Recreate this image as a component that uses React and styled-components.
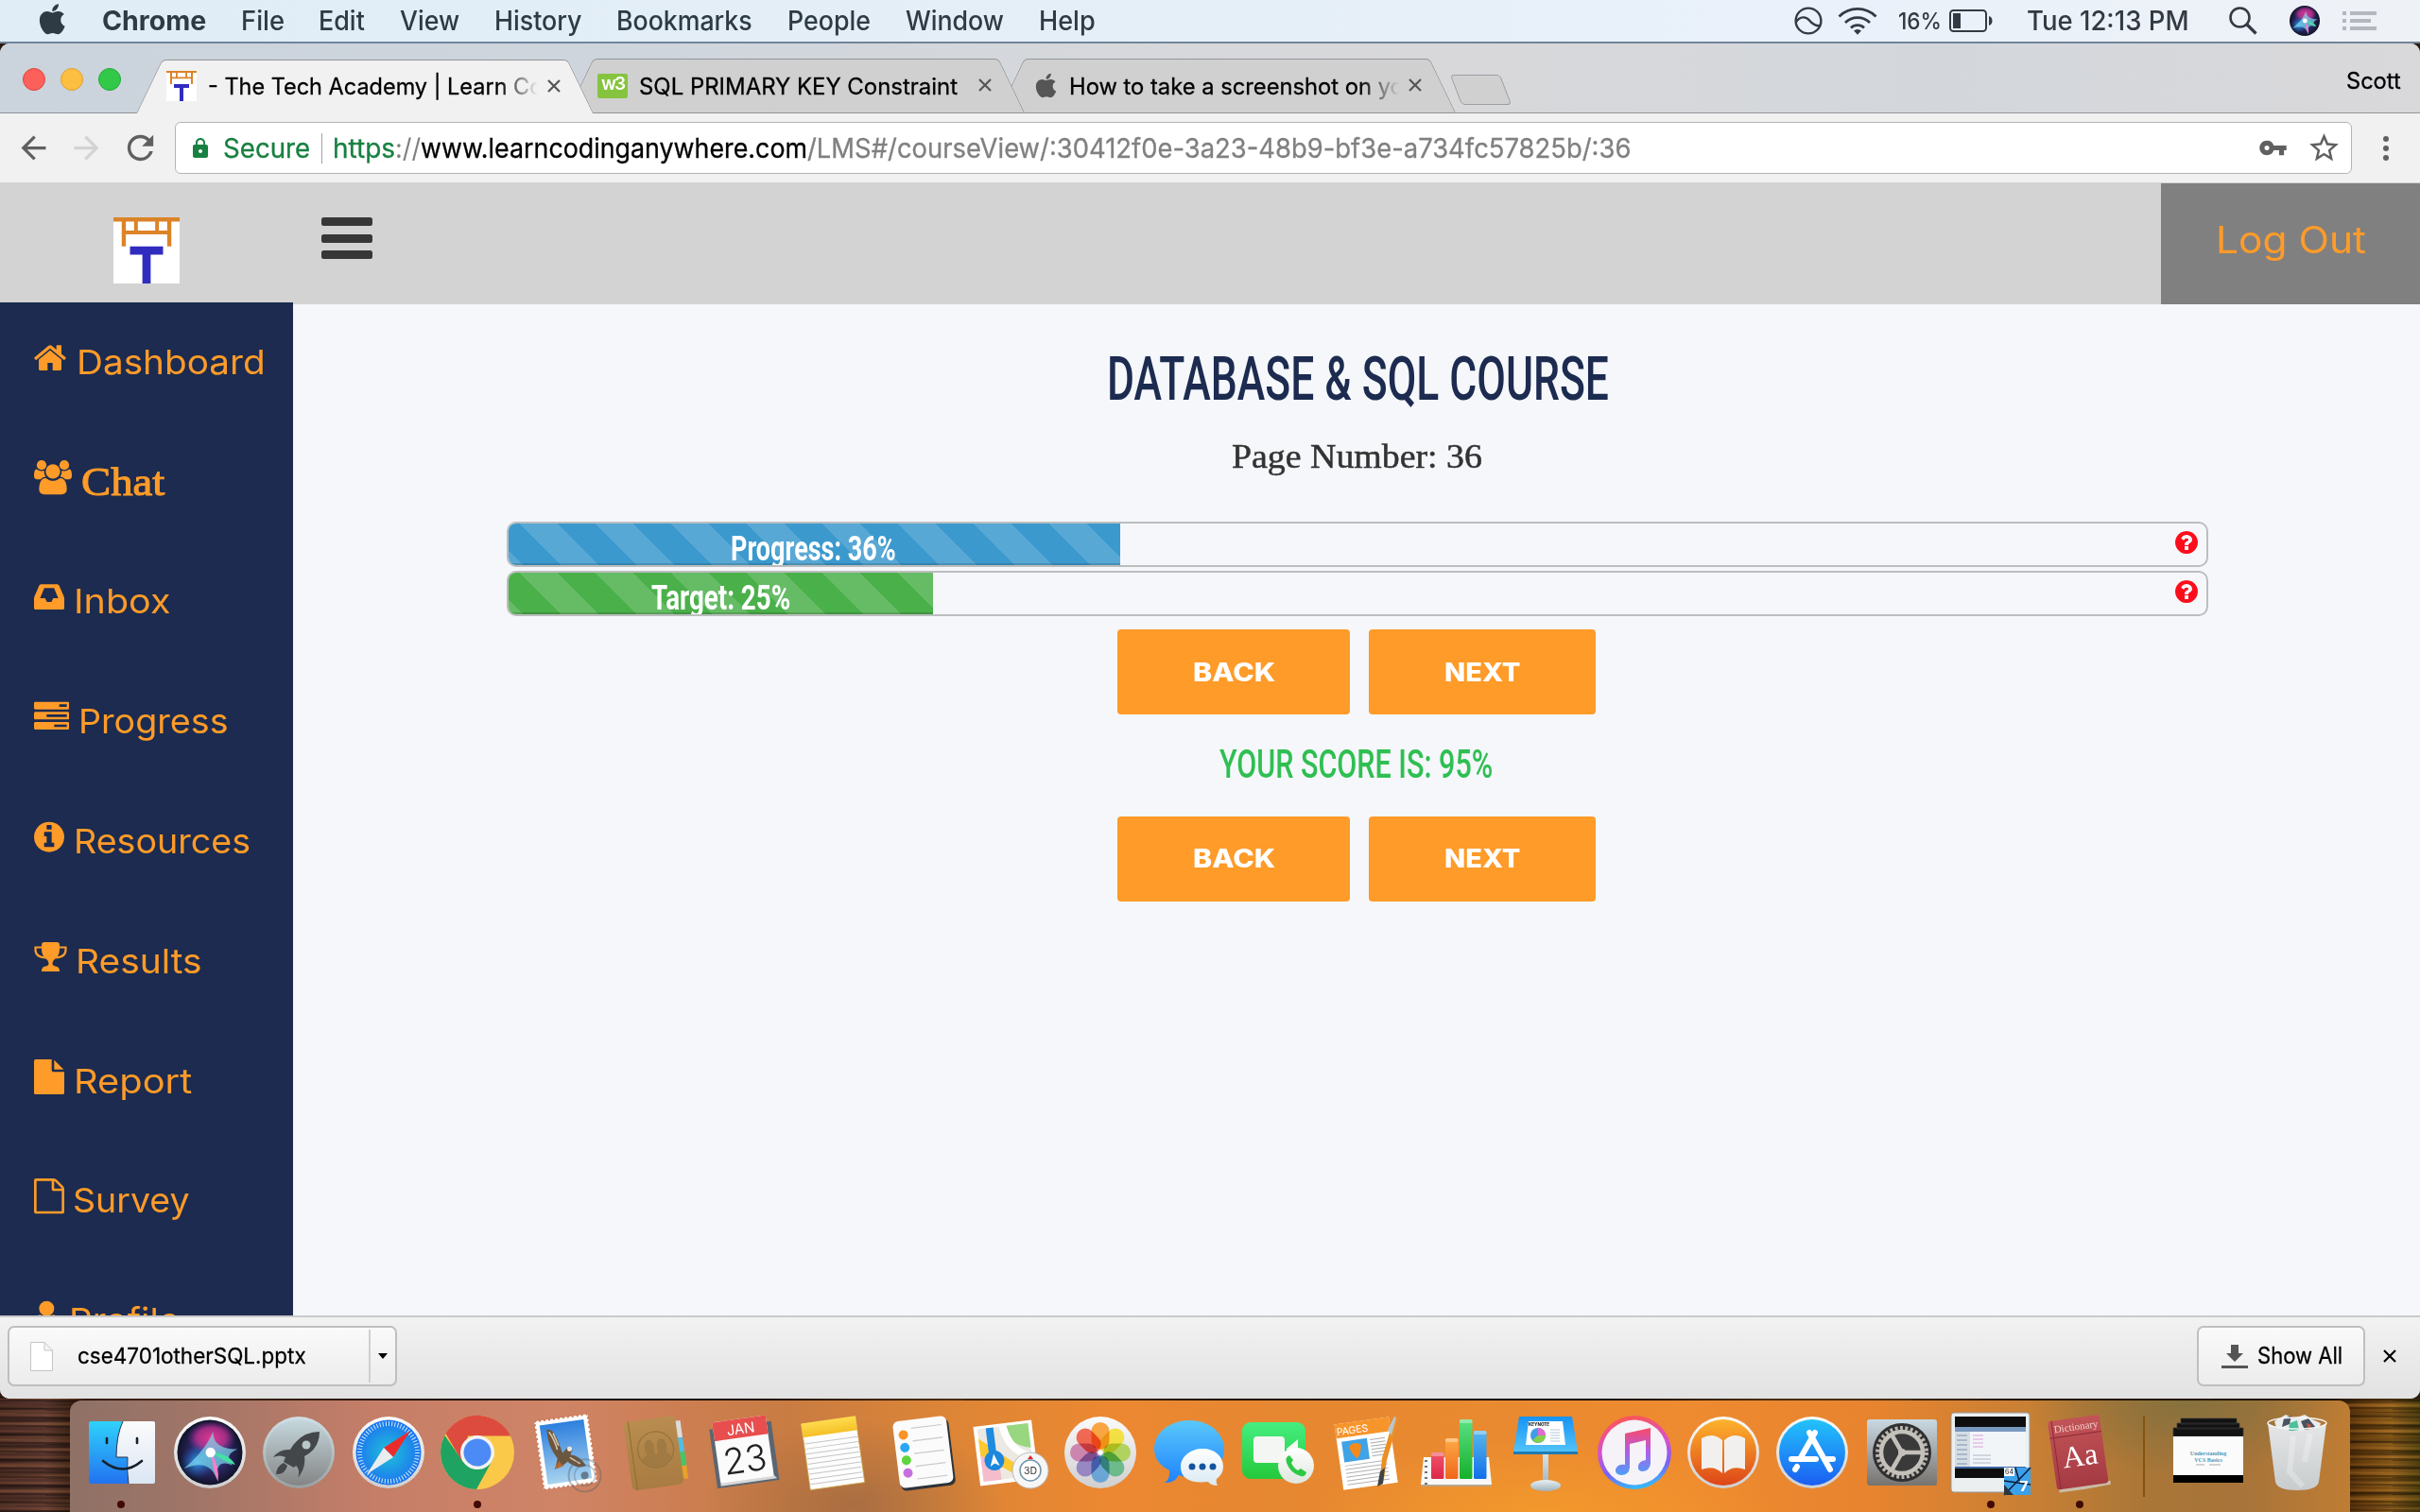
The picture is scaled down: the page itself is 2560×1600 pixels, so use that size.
import React, { useLayoutEffect, useRef, useState } from "react";
import styled, { createGlobalStyle } from "styled-components";
import { FaApple } from "react-icons/fa";
import { MdArrowBack, MdArrowForward, MdRefresh, MdLock, MdVpnKey, MdStarBorder } from "react-icons/md";

const SANS = `Inter, Roboto, "Liberation Sans", sans-serif`;
const CONDENSED = `Roboto, "Open Sans", "Liberation Sans", sans-serif`;
const SERIF = `"Liberation Serif", "DejaVu Serif", serif`;
const ORANGE = "#fe9b29";
const NAVY = "#1c2b4f";

const GlobalStyle = createGlobalStyle`
  *, *::before, *::after { box-sizing: border-box; }
  body { margin: 0; overflow: hidden; font-family: ${SANS}; }
  button { font: inherit; border: 0; padding: 0; background: none; color: inherit; }
  svg { display: block; flex: none; }
`;

/* ---------- fitted text: one line squeezed or stretched to a column width ---------- */
const FitBox = styled.span`
  display: block;
  flex: none;
  width: ${(p) => p.$w}px;
  margin-left: ${(p) => p.$ml || 0}px;
  padding-top: ${(p) => (p.$drop === undefined ? 2 : p.$drop)}px;
  line-height: 1.25;
  text-align: left;
  font-family: ${(p) => p.$font || SANS};
  font-size: ${(p) => p.$size}px;
  font-weight: ${(p) => p.$weight || 400};
  color: ${(p) => p.$color || "inherit"};
  -webkit-text-stroke: ${(p) => p.$stroke || 0}px currentColor;
`;
const FitInner = styled.span`
  display: inline-block;
  white-space: pre;
  transform-origin: 0 50%;
`;
function Fit({ w, children, size = 28, ...rest }) {
  const ref = useRef(null);
  const [scale, setScale] = useState(1);
  useLayoutEffect(() => {
    setScale(w / ref.current.offsetWidth);
  }, [w]);
  return (
    <FitBox $w={w} $size={size} $ml={rest.ml} $drop={rest.drop} $font={rest.font} $weight={rest.weight} $color={rest.color} $stroke={rest.stroke}>
      <FitInner ref={ref} style={{ transform: `scaleX(${scale})` }}>{children}</FitInner>
    </FitBox>
  );
}

const Screen = styled.div`
  width: 2560px;
  height: 1600px;
  display: flex;
  flex-direction: column;
  overflow: hidden;
  background: #2b1a12;
`;

/* ---------- menu bar ---------- */
const MenuBar = styled.header`
  height: 46px;
  flex: none;
  display: flex;
  align-items: center;
  padding: 0 46px 0 42px;
  border-bottom: 2px solid #71859a;
  background: linear-gradient(90deg, #e0edf6, #e5eff8 50%, #eaf1fa 75%, #eef2f7);
  color: #2e3a44;
`;
const AppleSlot = styled.span`
  width: 26px;
  margin-top: -4px;
  display: flex;
  justify-content: center;
`;
const MenuItems = styled.nav`
  display: flex;
  gap: 36.700px;
  margin-left: 40px;
  flex: 1;
`;
const StatusItems = styled.div`
  display: flex;
  align-items: center;
  color: #343a43;
`;
const MENUS = [
  ["Chrome", 110, 700], ["File", 46], ["Edit", 49], ["View", 63], ["History", 93],
  ["Bookmarks", 144], ["People", 88], ["Window", 104], ["Help", 60],
];

const SiriOrb = ({ r }) => (
  <g>
    <circle r={r} fill="url(#siriBase)" />
    <ellipse cx={r * 0.05} cy={-r * 0.45} rx={r * 0.75} ry={r * 0.52} fill="url(#siriPink)" />
    <ellipse cx={-r * 0.4} cy={r * 0.3} rx={r * 0.52} ry={r * 0.52} fill="url(#siriBlue)" />
    <path d={`M${-r * 0.8} ${r * 0.5}Q${-r * 0.1} ${-r * 0.1} ${r * 0.1} ${-r * 0.65}Q${r * 0.08} ${-r * 0.1} ${r * 0.85} ${-r * 0.1}Q${r * 0.4} ${r * 0.08} ${r * 0.7} ${r * 0.4}Q${r * 0.15} ${r * 0.15} ${r * 0.22} ${r * 0.85}Q${0} ${r * 0.15} ${-r * 0.8} ${r * 0.5}Z`} fill="#7fd9ec" opacity=".7" />
    <path d={`M${r * 0.05} ${r * 0.05}Q${r * 0.3} ${r * 0.4} ${r * 0.25} ${r * 0.9}Q${r * 0.08} ${r * 0.5} ${r * 0.05} ${r * 0.05}Z`} fill="#ff7fc4" />
    <path d={`M${r * 0.1} 0Q${r * 0.6} ${r * 0.05} ${r * 0.78} ${r * 0.38}Q${r * 0.4} ${r * 0.3} ${r * 0.1} 0Z`} fill="#45e0a4" />
    <circle cx={r * 0.02} cy={0} r={r * 0.15} fill="#fff" />
  </g>
);

const Defs = styled.svg`
  position: absolute;
  width: 0;
  height: 0;
`;
const grad = (id, a, b, c) => (
  <linearGradient id={id} x1="0" y1="0" x2="0" y2="1">
    <stop offset="0" stopColor={a} />
    {c && <stop offset=".5" stopColor={c} />}
    <stop offset="1" stopColor={b} />
  </linearGradient>
);
const SharedDefs = () => (
  <Defs aria-hidden="true">
    <defs>
      <radialGradient id="siriBase"><stop offset="0" stopColor="#2a6fc0" /><stop offset=".6" stopColor="#2a2560" /><stop offset="1" stopColor="#101428" /></radialGradient>
      <radialGradient id="siriPink"><stop offset="0" stopColor="#e0368f" /><stop offset=".6" stopColor="#c03090" stopOpacity=".8" /><stop offset="1" stopColor="#8a2a90" stopOpacity="0" /></radialGradient>
      <radialGradient id="siriBlue"><stop offset="0" stopColor="#2f9be8" /><stop offset="1" stopColor="#1f60c0" stopOpacity="0" /></radialGradient>
      {grad("gFinder", "#2fd2fb", "#2272f0")}
      {grad("gFace", "#fbfbfb", "#dbe6f4")}
      {grad("gRing", "#fbfbfb", "#cfcfcf")}
      {grad("gLaunch", "#c5d8de", "#858585")}
      {grad("gLaunchRing", "#cfe0e6", "#9aa0a2")}
      <radialGradient id="gSafari"><stop offset="0" stopColor="#20c3d8" /><stop offset="1" stopColor="#1c74f0" /></radialGradient>
      {grad("gSky", "#2d7fdf", "#a9d3ef")}
      {grad("gTan", "#b98d50", "#a87c42")}
      {grad("gNote", "#ffdc4f", "#f5c026")}
      {grad("gMsg", "#5ac8fa", "#1f83ff")}
      {grad("gPale", "#ffffff", "#d9e9f3")}
      {grad("gFt", "#45ee80", "#25c93c")}
      {grad("gFtw", "#ffffff", "#dfe5dc")}
      {grad("gRed", "#f2546c", "#dc2747")}
      {grad("gOr", "#fdab45", "#f0661c")}
      {grad("gGr", "#5be083", "#16b02b")}
      {grad("gBl", "#5ab7ea", "#1070ec")}
      {grad("gKey", "#1793f5", "#55c6f8")}
      {grad("gSteel", "#e9f1f5", "#9fb2bd")}
      <linearGradient id="gTunes" x1=".5" y1="0" x2=".7" y2="1"><stop offset="0" stopColor="#fb5658" /><stop offset=".4" stopColor="#d84fd0" /><stop offset=".7" stopColor="#7a62f5" /><stop offset="1" stopColor="#29c8fb" /></linearGradient>
      {grad("gNoteGlyph", "#fb4a63", "#4aa0f8", "#b25de8")}
      {grad("gBooks", "#fdb32c", "#dd4518")}
      {grad("gStore", "#22c3fb", "#1b5ef2")}
      {grad("gPref", "#c9d9e2", "#77736e")}
      {grad("gDict", "#c25457", "#a53a43")}
      {grad("gTrash", "#e4e6e7", "#c9cccd")}
    </defs>
  </Defs>
);

const EyeIcon = () => (
  <svg width="30" height="30" viewBox="0 0 30 30" fill="none" stroke="currentColor" strokeWidth="2.4">
    <circle cx="15" cy="15" r="13.4" />
    <path d="M2 16.500C6 9.500 13 10.500 16 14.500S24 21 27.500 20" />
  </svg>
);
const WifiIcon = () => (
  <svg width="42" height="30" viewBox="0 0 42 30" fill="none" stroke="currentColor" strokeWidth="2.8">
    <path d="M1.500 10.500A27.500 27.500 0 0 1 40.500 10.500M8 17A18.500 18.500 0 0 1 34 17M14 22.500A10 10 0 0 1 28 22.500" />
    <path d="M17 25.500Q21 22.500 25 25.500L21 29.800Z" fill="currentColor" stroke="none" />
  </svg>
);
const BatteryIcon = () => (
  <svg width="46" height="24" viewBox="0 0 46 24">
    <rect x="1" y="1" width="38" height="22" rx="3.500" fill="none" stroke="currentColor" strokeWidth="2" />
    <rect x="4" y="4" width="8" height="16" fill="currentColor" />
    <path d="M42 7Q45.500 8 45.500 12T42 17Z" fill="currentColor" />
  </svg>
);
const SearchIcon = () => (
  <svg width="30" height="30" viewBox="0 0 30 30" fill="none" stroke="currentColor" strokeWidth="2.600">
    <circle cx="11.500" cy="11.500" r="10" />
    <path d="M18.500 18.500L28.500 28.500" strokeWidth="3.200" />
  </svg>
);
const ListIcon = () => (
  <svg width="36" height="20" viewBox="0 0 36 20" fill="#b4b8be">
    <path d="M0 0h4v4H0zM8 0h28v4H8zM0 8h4v4H0zM8 8h22v4H8zM0 16h4v4H0zM8 16h28v4H8z" />
  </svg>
);
const Gap = styled.i`
  flex: none;
  width: ${(p) => p.$w}px;
`;

/* ---------- browser window ---------- */
const Window = styled.main`
  height: 1434px;
  flex: none;
  display: flex;
  flex-direction: column;
  overflow: hidden;
  border-radius: 10px;
  background: #f5f7fb;
`;
const TabStrip = styled.div`
  height: 74px;
  flex: none;
  display: flex;
  align-items: flex-end;
  border-bottom: 1px solid #919498;
  background: linear-gradient(90deg, #cbd3dc, #ced5dd 25%, #d6d8db 45%, #d8d8da 60%, #d3d7dc 80%, #d9d8da);
`;
const Lights = styled.div`
  display: flex;
  gap: 16px;
  width: 144px;
  padding: 0 0 23px 24px;
`;
const Light = styled.i`
  width: 24px;
  height: 24px;
  border-radius: 50%;
  background: ${(p) => p.$c};
  border: 1px solid ${(p) => p.$b};
`;
const TabBox = styled.div`
  position: relative;
  z-index: ${(p) => p.$z};
  width: 484px;
  height: 57px;
  flex: none;
  margin-left: ${(p) => (p.$active ? 0 : -28)}px;
  margin-bottom: ${(p) => (p.$active ? -1 : 0)}px;
  padding: 0 0 1px 32px;
  display: flex;
  align-items: center;
  &::before, &::after {
    content: "";
    position: absolute;
    z-index: -1;
    top: 0;
    bottom: 0;
    background: ${(p) => (p.$active ? "#f1f1f1" : "#d0d0d0")};
    border-top: 1px solid #919498;
  }
  &::before {
    left: 0;
    right: 50%;
    border-left: 1px solid #919498;
    border-top-left-radius: 5px;
    transform: skewX(-25.700deg);
    transform-origin: 0 100%;
  }
  &::after {
    right: 0;
    left: 45%;
    border-right: 1px solid #919498;
    border-top-right-radius: 5px;
    transform: skewX(25.700deg);
    transform-origin: 100% 100%;
  }
`;
const TabTitle = styled.div`
  flex: none;
  width: ${(p) => p.$w}px;
  margin-left: ${(p) => p.$ml}px;
  overflow: hidden;
  color: #000;
  ${(p) => p.$fade && "mask-image: linear-gradient(90deg, #000 calc(100% - 42px), transparent);"}
`;
const Close = ({ size = 14, color = "#555" }) => (
  <svg width={size} height={size} viewBox="0 0 14 14" stroke={color} strokeWidth="2.200"><path d="M1 1l12 12M13 1L1 13" /></svg>
);
const NewTab = styled.i`
  width: 53px;
  height: 32px;
  margin: 0 0 8px 0;
  border: 1px solid #9b9ea1;
  border-radius: 4px;
  background: #d0d0d0;
  transform: skewX(21deg);
`;
const Profile = styled.div`
  margin-left: auto;
  padding: 0 20px 18px 0;
`;
const Toolbar = styled.div`
  height: 73px;
  flex: none;
  display: flex;
  align-items: center;
  padding: 0 33px 0 16px;
  background: #f1f1f1;
  color: #606060;
`;
const Omnibox = styled.div`
  width: 2303px;
  height: 55px;
  margin-left: 16px;
  padding: 0 10px 0 14px;
  display: flex;
  align-items: center;
  border: 1px solid #b4b4b4;
  border-radius: 6px;
  background: #fff;
`;
const Divider = styled.i`
  width: 1px;
  height: 32px;
  margin: 0 11px 0 12px;
  background: #a0a0a0;
`;
const Spacer = styled.div`
  flex: 1;
`;

const TechLogo = ({ size }) => (
  <svg width={size} height={size} viewBox="0 0 16 16">
    <path fill="#fff" d="M0 0h16v16H0z" />
    <path fill="#dc8327" d="M0 0h16v1H0zM2 1h1v6H2zM13 1h1v6h-1zM3 3.200h10v.9H3zM5 1h.9v2.200H5zM10.100 1h.9v2.200h-.9z" />
    <path fill="#312cc0" d="M4 7h8v2H9v7H7V9H4z" />
  </svg>
);
const W3Icon = styled.div`
  width: 32px;
  height: 26px;
  flex: none;
  margin-top: 2px;
  border-radius: 2px;
  background: #86c440;
  color: #fff;
  font: 600 19px/22px ${SANS};
  letter-spacing: -2px;
  text-align: center;
`;

/* ---------- page ---------- */
const PageHeader = styled.div`
  height: 129px;
  flex: none;
  display: flex;
  padding: 1px 0 0 120px;
  background: #d3d3d3;
`;
const LogoSlot = styled.div`
  padding-top: 36px;
`;
const Hamburger = styled.button`
  width: 54px;
  margin: 36px 0 0 150px;
  display: flex;
  flex-direction: column;
  gap: 8.500px;
  i { height: 9px; border-radius: 2.500px; background: #373737; }
`;
const LogOut = styled.button`
  width: 274px;
  height: 128px;
  margin-left: auto;
  padding: 0 0 8px 58px;
  display: flex;
  align-items: center;
  background: #808080;
`;
const Body = styled.div`
  flex: 1;
  min-height: 0;
  display: flex;
`;
const Sidebar = styled.aside`
  width: 310px;
  height: 1072px;
  margin-top: -2px;
  flex: none;
  overflow: hidden;
  background: ${NAVY};
  color: ${ORANGE};
`;
const NavItem = styled.a`
  height: 126.800px;
  padding-left: 36px;
  display: flex;
  align-items: center;
  svg { margin-bottom: 10px; }
`;
const FaGlyph = ({ d, x = 128, w = 1536 }) => (
  <svg width={w / 48} height="37.333" viewBox={`${x} 0 ${w} 1792`} fill="currentColor"><path d={d} fillRule="evenodd" /></svg>
);
const DISC = "M1664 896q0 209-103 385.500T1281.500 1561 896 1664t-385.500-103T231 1281.500 128 896t103-385.500T510.500 231 896 128t385.500 103T1561 510.500 1664 896z";
const UsersIcon = () => (
  <svg width="40" height="37.333" viewBox="0 0 1920 1792" fill="currentColor">
    <g transform="translate(0 -50)">
      <circle cx="384" cy="300" r="245" /><circle cx="1536" cy="300" r="245" /><circle cx="960" cy="622" r="365" />
      <path d="M593 896q-162 5-265 128H194q-82 0-138-40.500T0 865q0-353 124-353 6 0 43.500 21t97.500 42.500T384 597q67 0 133-23-5 37-5 66 0 139 81 256zM1327 896q81-117 81-256 0-29-5-66 66 23 133 23 59 0 119-21.500t97.500-42.500 43.500-21q124 0 124 353 0 78-56 118.500T1726 1024h-134q-103-123-265-128zM1664 1533q0 120-73 189.500t-194 69.500H523q-121 0-194-69.500T256 1533q0-53 3.500-103.500t14-109T300 1212t43-97.500 62-81 85.500-53.500T602 960q10 0 43 21.500t73 48 107 48 135 21.500 135-21.500 107-48 73-48 43-21.500q61 0 111.500 20t85.500 53.500 62 81 43 97.500 26.500 108.500 14 109 3.500 103.500z" />
    </g>
  </svg>
);
const TrophyIcon = () => (
  <svg width="35" height="37.333" viewBox="0 0 35 37.333" fill="none" stroke="currentColor" strokeWidth="2.200">
    <path d="M9 8.500H1.500V11Q1.500 19 12.500 19.500M26 8.500H33.500V11Q33.500 19 22.500 19.500" />
    <path stroke="none" fill="currentColor" d="M8 6Q8 3 11 3H24Q27 3 27 6V11Q27 17 22 21Q19.500 23 19.500 25.500Q19.500 28 23 28.500Q26 29 27 32V34H8V32Q9 29 12 28.500Q15.500 28 15.500 25.500Q15.500 23 13 21Q8 17 8 11Z" />
  </svg>
);
const NAV = [
  ["Dashboard", 200, 11, <FaGlyph x={80} w={1632} d="M1472 992v480q0 26-19 45t-45 19h-384v-384H768v384H384q-26 0-45-19t-19-45V992q0-1 .5-3t.5-3l575-474 575 474q1 2 1 6zm223-69l-62 74q-8 9-21 11h-3q-13 0-21-7L896 424l-692 577q-12 8-24 7-13-2-21-11l-62-74q-8-10-7-23.500T101 878l719-599q32-26 76-26t76 26l244 204V288q0-14 9-23t23-9h192q14 0 23 9t9 23v408l219 182q10 8 11 21.500t-7 23.500z" />],
  ["Chat", 88, 10, <UsersIcon />, SERIF],
  ["Inbox", 102, 10, <FaGlyph d="M1104 960h255q-1-3-2.500-8t-2.500-8l-212-496H650L438 944q-1 2-2.500 8t-2.500 8h255l95 192h226zm560 30v482q0 26-19 45t-45 19H192q-26 0-45-19t-19-45V990q0-62 25-123l238-552q10-25 36.500-42t52.500-17h832q26 0 52.500 17t36.500 42l238 552q25 61 25 123z" />],
  ["Progress", 159, 10, <FaGlyph x={0} w={1792} d="M1024 1408h640v-128h-640v128zm-384-512h1024V768H640v128zm640-512h384V256h-384v128zm512 832v256q0 26-19 45t-45 19H64q-26 0-45-19t-19-45v-256q0-26 19-45t45-19h1664q26 0 45 19t19 45zm0-512v256q0 26-19 45t-45 19H64q-26 0-45-19T0 960V704q0-26 19-45t45-19h1664q26 0 45 19t19 45zm0-512v256q0 26-19 45t-45 19H64q-26 0-45-19T0 448V192q0-26 19-45t45-19h1664q26 0 45 19t19 45z" />],
  ["Resources", 187, 10, <FaGlyph d={"M1152 1376v-160q0-14-9-23t-23-9h-96V672q0-14-9-23t-23-9H672q-14 0-23 9t-9 23v160q0 14 9 23t23 9h96v320h-96q-14 0-23 9t-9 23v160q0 14 9 23t23 9h448q14 0 23-9t9-23zm-128-896V320q0-14-9-23t-23-9H800q-14 0-23 9t-9 23v160q0 14 9 23t23 9h192q14 0 23-9t9-23z" + DISC} />],
  ["Results", 134, 9, <TrophyIcon />],
  ["Report", 125, 10, <FaGlyph d="M1152 512V40q22 14 36 28l408 408q14 14 28 36h-472zm-128 32q0 40 28 68t68 28h544v1056q0 40-28 68t-68 28H224q-40 0-68-28t-28-68V96q0-40 28-68T224 0h800v544z" />],
  ["Survey", 124, 9, <FaGlyph d="M1596 380q28 28 48 76t20 88v1152q0 40-28 68t-68 28H224q-40 0-68-28t-28-68V96q0-40 28-68T224 0h896q40 0 88 20t76 48zm-444-244v376h376q-10-29-22-41l-313-313q-12-12-41-22zm384 1528V640h-416q-40 0-68-28t-28-68V128H256v1536h1280z" />],
  ["Profile", 117, 10, <FaGlyph x={256} w={1280} d="M1536 1399q0 109-62.500 187t-150.500 78H469q-88 0-150.500-78T256 1399q0-85 8.500-160.500t31.500-152 58.500-131 94-89T583 832q131 128 313 128t313-128q76 0 134.500 34.500t94 89 58.500 131 31.500 152 8.500 160.500zM1280 512q0 159-112.500 271.500T896 896 624.500 783.500 512 512t112.500-271.500T896 128t271.500 112.500T1280 512z" />],
];
const Content = styled.section`
  flex: 1;
  display: flex;
  flex-direction: column;
  align-items: center;
  padding: 38px 0 0 2px;
`;
const PageNumber = styled.div`
  margin: 19px 2px 0 0;
`;
const Bars = styled.div`
  display: flex;
  flex-direction: column;
  gap: 4px;
  margin-top: 46px;
`;
const Track = styled.div`
  width: 1800px;
  height: 48px;
  display: flex;
  justify-content: space-between;
  overflow: hidden;
  border: 2px solid #bcbebe;
  border-radius: 10px;
  svg { margin: 8px 9px 0 0; }
`;
const Fill = styled.div`
  height: 44px;
  padding: 2px 1px 0 0;
  display: flex;
  justify-content: center;
  color: #fff;
  background: linear-gradient(45deg, rgba(255,255,255,.15) 25%, transparent 25%, transparent 50%, rgba(255,255,255,.15) 50%, rgba(255,255,255,.15) 75%, transparent 75%) 12px 0 / 80px 80px ${(p) => p.$c};
  box-shadow: inset 0 -2px 0 rgba(0,0,0,.15);
`;
const HelpIcon = () => (
  <svg width="24" height="24" viewBox="128 128 1536 1536" fill="#fd0d1b">
    <path fillRule="evenodd" d={"M1024 1376v-192q0-14-9-23t-23-9H800q-14 0-23 9t-9 23v192q0 14 9 23t23 9h192q14 0 23-9t9-23zm256-672q0-88-55.500-163t-138.500-116-170-41q-243 0-371 213-15 24 8 42l132 100q7 6 19 6 16 0 25-12 53-68 86-92 34-24 86-24 48 0 85.500 26t37.500 59q0 38-20 61t-68 45q-63 28-115.500 86.500T768 1020v36q0 14 9 23t23 9h192q14 0 23-9t9-23q0-19 21.500-49.500t54.500-49.500q32-18 49-28.500t46-35 44.500-48 28-60.500 12.500-81z" + DISC} />
  </svg>
);
const ButtonRow = styled.div`
  display: flex;
  gap: 20px;
  margin: ${(p) => p.$mt}px 2px 0 0;
`;
const ActionButton = styled.button`
  width: ${(p) => p.$w}px;
  height: 90px;
  display: flex;
  align-items: center;
  justify-content: center;
  border-radius: 4px;
  background: ${ORANGE};
  color: #fff;
`;
const Score = styled.div`
  margin: 25px 3px 0 0;
`;
const PagerButtons = ({ mt }) => (
  <ButtonRow $mt={mt}>
    <ActionButton $w={246}><Fit w={87} size={26.500} drop={1} weight={800}>BACK</Fit></ActionButton>
    <ActionButton $w={240}><Fit w={81} size={26.500} drop={1} weight={800}>NEXT</Fit></ActionButton>
  </ButtonRow>
);

/* ---------- downloads shelf ---------- */
const Shelf = styled.footer`
  height: 88px;
  flex: none;
  display: flex;
  align-items: center;
  padding: 0 25px 4px 8px;
  border-top: 2px solid #c9c9cb;
  background: linear-gradient(#f2f2f2, #e2e2e2);
  color: #000;
`;
const Chip = styled.div`
  width: ${(p) => p.$w}px;
  height: 64px;
  padding-left: ${(p) => p.$pl}px;
  display: flex;
  align-items: center;
  border: 2px solid #bfbfbf;
  border-radius: 7px;
  background: linear-gradient(#fafafa, #ececec);
`;
const ChipRule = styled.i`
  width: 2px;
  height: 56px;
  margin: 0 8px 0 66px;
  background: #cfcfcf;
`;

/* ---------- desktop and dock ---------- */
const Desktop = styled.div`
  flex: 1;
  padding: 2px 74px 0;
  background:
    repeating-linear-gradient(0.600deg, rgba(0,0,0,.35) 0 2px, rgba(255,170,90,.07) 3px 5px, rgba(0,0,0,.12) 6px 9px),
    repeating-linear-gradient(-0.800deg, rgba(255,170,90,.08) 0 3px, rgba(0,0,0,.26) 5px 8px, transparent 9px 14px),
    linear-gradient(90deg, #502e26 0, #633c33 50px, #2c1608 90px, #2a1a04 2460px, #75450e 2500px, #92601a 2530px, #57460f 2560px);
`;
const DockBar = styled.div`
  height: 118px;
  padding-left: 7px;
  display: flex;
  border-radius: 12px 12px 0 0;
  background:
    radial-gradient(ellipse 160px 90px at 830px 110px, rgba(165,108,66,.9), transparent),
    radial-gradient(ellipse 260px 90px at 1560px 130px, rgba(246,158,42,.8), transparent),
    radial-gradient(ellipse 170px 80px at 2240px 0px, rgba(130,112,62,.9), transparent),
    linear-gradient(90deg, #8f7166 0, #a07568 130px, #c57e68 320px, #cf8466 520px, #cd7f56 620px, #c97c42 760px, #dd8536 930px, #ec8831 1100px, #e68731 1280px, #e98a30 1500px, #ee8a2f 1700px, #e8842f 1900px, #c98034 2070px, #a97637 2200px, #a8743a 2300px, #bf7d33 2412px);
`;
const Slot = styled.div`
  width: 94.180px;
  flex: none;
  display: flex;
  flex-direction: column;
  align-items: center;
  padding-top: 7px;
`;
const RunDot = styled.i`
  width: 8px;
  height: 8px;
  margin-top: 3px;
  border-radius: 50%;
  background: #420a04;
`;
const DockRule = styled.i`
  width: 2px;
  height: 86px;
  margin: 16px 20px 0 20px;
  background: #84530f;
`;
const petals = ["#f99a2b", "#f2dd2c", "#a9cf4c", "#5db57f", "#5b9ed6", "#8d7bc0", "#c977a8", "#f0553c"];
const T = (props) => <text textAnchor="middle" fontFamily={SANS} {...props} />;
const lines = (n, y0, dy, x1, x2, c = "#c5c5c5", w = 1) =>
  Array.from({ length: n }, (_, i) => <path key={i} d={`M${x1} ${y0 + i * dy}H${x2}`} stroke={c} strokeWidth={w} />);

const APPS = [
  ["Finder", <g>
    <rect x="-34" y="-33" width="70" height="66" rx="2" fill="url(#gFinder)" />
    <path d="M2 -33H34Q36 -33 36 -31V31Q36 33 34 33H8Q6 20 7 5H-5Q-5 -18 2 -33Z" fill="url(#gFace)" />
    <path d="M2 -33Q-5 -18 -5 5H7Q6 20 8 33" fill="none" stroke="#26364e" strokeWidth="1" />
    <path d="M-15 -15V-10M17 -15V-10M-19 9Q2 26 22 9" stroke="#16202c" strokeWidth="2.600" strokeLinecap="round" fill="none" />
  </g>, true],
  ["Siri", <g><circle r="38" fill="url(#gRing)" /><SiriOrb r={34.500} /></g>],
  ["Launchpad", <g>
    <circle r="38" fill="url(#gLaunchRing)" /><circle r="35" fill="url(#gLaunch)" />
    <path d="M22 -22Q2 -22 -9 -3Q-20 -4 -27 5Q-20 2 -14 5L-16 10L-5 16L-3 14Q2 18 -1 27Q8 16 6 4Q22 -4 22 -22Z" fill="#43474a" />
    <circle cx="8" cy="-8" r="4.500" fill="#b9c6ca" /><path d="M-16 11Q-23 14 -24 23Q-15 24 -12 14Z" fill="#43474a" />
  </g>],
  ["Safari", <g>
    <circle r="38" fill="url(#gRing)" /><circle r="34.500" fill="url(#gSafari)" />
    <circle r="30.500" fill="none" stroke="#cfe9fb" strokeWidth="5" strokeDasharray="1 2.190" />
    <path d="M23 -23L5 5L-5 -5Z" fill="#ee2b2b" /><path d="M-23 23L-5 -5L5 5Z" fill="#e9edf0" />
  </g>],
  ["Chrome", <g>
    <circle r="39" fill="#fbc94a" />
    <path d="M-34.500 -18A39 39 0 0 0 -1 39L17 6L-15 10Z" fill="#1ea362" />
    <path d="M35 -17.500A39 39 0 0 0 -33.500 -20L-17 8L-10 -17.500Z" fill="#dd4b3e" />
    <circle r="18" fill="#f3f3f3" /><circle r="14.500" fill="#4c8bf5" />
  </g>, true],
  ["Mail", <g transform="translate(-1 0) rotate(-8)">
    <rect x="-28" y="-37" width="57" height="73" fill="#fff" />
    <rect x="-28" y="-37" width="57" height="73" fill="none" stroke="#cc7d5c" strokeWidth="2.500" strokeDasharray="2 3" />
    <rect x="-23" y="-32" width="47" height="63" fill="url(#gSky)" />
    <path d="M-16 -27Q-9 -27 -6 -14L-3 0L2 -4Q5 -6 8 -2L5 3Q14 5 20 17Q10 20 1 10L-4 13L-13 16L-9 5Q-18 -10 -16 -27Z" fill="#6b5640" />
    <path d="M-14 -24Q-9 -14 -8 -4M-10 -22L-6 -8M4 6L14 14" stroke="#d5c4a8" strokeWidth="1.600" fill="none" /><circle cx="5" cy="-3" r="2.500" fill="#f0e8dc" /><path d="M-14 16L-8 8L-4 14Z" fill="#b4672f" />
    <circle cx="17" cy="27" r="17" fill="none" stroke="#59616b" strokeOpacity=".4" strokeWidth="2" /><circle cx="17" cy="27" r="11" fill="none" stroke="#59616b" strokeOpacity=".35" strokeWidth="1.500" />
    <circle cx="17" cy="27" r="4" fill="#3c4652" fillOpacity=".6" />
  </g>],
  ["Contacts", <g transform="rotate(-8)">
    <path d="M25 -30H31V-12H25Z" fill="#dcdcdc" /><path d="M25 -12H31V3H25Z" fill="#52bde0" /><path d="M25 3H31V18H25Z" fill="#42c86a" /><path d="M25 18H31V32H25Z" fill="#e8a12a" />
    <rect x="-29" y="-36" width="55" height="73" rx="5" fill="url(#gTan)" /><path d="M-24 -36V37" stroke="#93702f" strokeWidth="1.200" />
    <circle cx="1" cy="-3" r="19" fill="none" stroke="#97733c" strokeWidth="1.300" />
    <path d="M-15 7Q-13 3 -9 2Q-13 -13 -5 -14Q1 -13 -1 0L1 3L3 0Q1 -13 8 -14Q15 -12 12 2Q15 3 17 7Q9 16 1 15Q-8 16 -15 7Z" fill="#a07a42" />
  </g>],
  ["Calendar", <g transform="rotate(-8)">
    <path d="M-33 -29H33V34H-33Z" fill="#5b6671" /><path d="M-29 28H28L31 32H-29Z" fill="#d9d9d9" />
    <rect x="-29" y="-36" width="57" height="65" rx="2" fill="#fbfbfb" /><path d="M-29 -36H28V-16H-29Z" fill="#e84e4e" />
    <T y="-20" fontSize="15" fill="#fff">JAN</T><T y="21" fontSize="38" fontWeight="300" fill="#222">23</T>
  </g>],
  ["Notes", <g transform="rotate(-8)">
    <rect x="-29" y="-34" width="58" height="70" fill="#fdfdfd" stroke="#c9a54a" strokeWidth=".8" /><path d="M-29 -35H29V-20H-29Z" fill="url(#gNote)" />
    {lines(9, -13, 5.400, -28, 28)}
  </g>],
  ["Reminders", <g transform="translate(1 0) rotate(-7)">
    <rect x="-28" y="-33" width="58" height="71" rx="6" fill="#2e3338" /><rect x="-29" y="-36" width="57" height="71" rx="6" fill="#fbfbfb" />
    {lines(5, -27, 13.500, -10, 22, "#cacaca", 1.200)}
    {["#fb9327", "#2aa7f3", "#5fd43c", "#c66fdf"].map((c, i) => <circle key={c} cx="-19" cy={-21 + i * 13.500} r="5" fill={c} />)}
  </g>],
  ["Maps", <g>
    <g transform="translate(-6 0) rotate(-7)">
      <rect x="-31" y="-31" width="62" height="63" fill="#fff" /><rect x="-27" y="-28" width="54" height="56" fill="#ece9e2" />
      <path d="M2 -28H27V-2Q4 -6 2 -28Z" fill="#98d77f" /><path d="M-4 -28Q0 4 27 10V3Q8 -2 4 -28Z" fill="#fff" />
      <path d="M-27 -18L10 14V26L-27 0Z" fill="#fdc92e" /><path d="M-27 0L-8 14V28H-27Z" fill="#f5bccb" /><path d="M-18 -28H-10V12H-18Z" fill="#1e8be0" />
      <circle cx="-13" cy="7" r="10.500" fill="#1b87dd" /><path d="M-13 0L-8 13L-13 10L-18 13Z" fill="#fff" />
    </g>
    <circle cx="20" cy="19" r="19" fill="#f6f6f6" stroke="#b9b9b9" strokeWidth="1" /><circle cx="20" cy="19" r="11" fill="#fff" stroke="#7295a8" strokeWidth="1.500" />
    <T x="20" y="23" fontSize="10.500" fill="#333">3D</T><path d="M20 3L23 7H17Z" fill="#e52222" />
  </g>],
  ["Photos", <g>
    <circle r="38" fill="url(#gRing)" />
    <g style={{ isolation: "isolate" }}>{petals.map((c, i) => <rect key={c} x="-9.500" y="-32" width="19" height="29" rx="9.500" fill={c} opacity=".88" transform={`rotate(${i * 45})`} style={{ mixBlendMode: "multiply" }} />)}</g>
    <circle r="2" fill="#fff" />
  </g>],
  ["Messages", <g>
    <path d="M0 -34C21 -34 37 -21 37 -3C37 15 20 27 -1 26Q-6 26 -11 24Q-16 33 -26 32Q-20 28 -21 19Q-37 11 -37 -4C-37 -21 -20 -34 0 -34Z" fill="url(#gMsg)" />
    <path d="M14 -4C27 -4 36 4 36 15Q36 23 29 28Q28 32 30 35Q23 35 20 31Q-9 34 -9 15C-9 4 2 -4 14 -4Z" fill="url(#gPale)" />
    <circle cx="3" cy="15" r="3.500" fill="#15559f" /><circle cx="14" cy="15" r="3.500" fill="#15559f" /><circle cx="25" cy="15" r="3.500" fill="#15559f" />
  </g>],
  ["FaceTime", <g>
    <rect x="-38" y="-32" width="67" height="60" rx="9" fill="url(#gFt)" /><rect x="-26" y="-17" width="33" height="28" rx="4" fill="#f3f6f3" />
    <path d="M9 -4L21 -14V6L9 -1Z" fill="#f3f6f3" /><circle cx="19" cy="14" r="19" fill="url(#gFtw)" />
    <path d="M12 3Q7 5 9 11Q13 22 24 25Q29 26 30 21L24 17L21 19Q16 16 14 11L16 8Z" fill="#2cc944" />
  </g>],
  ["Pages", <g>
    <g transform="rotate(-8)">
      <rect x="-30" y="-34" width="58" height="70" fill="#fff" /><path d="M-30 -34H28V-19H-30Z" fill="#f7942a" />
      <T x="-12" y="-22" fontSize="10.500" fill="#fff">PAGES</T><rect x="-25" y="-15" width="27" height="22" fill="#3fa3e6" />
      <path d="M-18 -9Q-11 -14 -5 -9Q-6 0 -11 5Q-17 -1 -18 -9Z" fill="#f58a1c" />
      {lines(6, -13, 3.500, 5, 21, "#aaa")}{lines(6, 11, 4, -25, 20, "#b0b0b0")}
    </g>
    <path d="M29 -38L34 -36L21 8L18 28L14 36V26L16 6Z" fill="#eb8f24" /><path d="M22 -24L29 -38L31 -37L26 -18Z" fill="#b8c6cf" /><path d="M16 20L14 37L8 40L11 24Z" transform="translate(3 -4)" fill="#424242" />
  </g>],
  ["Numbers", <g>
    <path d="M-35 5H34L37 34H-38Z" fill="#f8f8f8" /><path d="M-38 34H37V36H-38Z" fill="#b7a58d" />
    {[["#gRed", -27, 0], ["#gOr", -12, -15], ["#gGr", 3, -35], ["#gBl", 18, -23]].map(([g, x, y]) => (
      <g key={g}><rect x={x} y={y} width="13.500" height={28 - y} rx="1.500" fill={`url(${g})`} /><rect x={x} y={y} width="13.500" height="4" rx="1.500" fill="#fff" opacity=".35" /></g>
    ))}
    {lines(5, 9, 6, -34, -31, "#777", 2)}
  </g>],
  ["Keynote", <g>
    <path d="M-3 -8H3V36H-3Z" fill="url(#gSteel)" /><ellipse cx="0" cy="35" rx="16" ry="6" fill="url(#gSteel)" />
    <path d="M-28 -38H28L34 -1V1H-34V-1Z" fill="url(#gKey)" /><path d="M-34 -1H34V2H-34Z" fill="#1f7bb5" />
    <path d="M-18 -33H18L21 -8H-21Z" fill="#fff" /><T x="-7" y="-28" fontSize="4.500" fontWeight="800" fill="#222">KEYNOTE</T>
    <circle cx="-8" cy="-18" r="8" fill="#3f9ee8" /><path d="M-8 -18V-26A8 8 0 0 1 0 -18Z" fill="#e26ad2" /><path d="M-8 -18H0A8 8 0 0 1 -14 -13Z" fill="#86cf4a" />
    {lines(5, -24, 3, 5, 15, "#b4c8d8")}
  </g>],
  ["iTunes", <g>
    <circle r="39" fill="url(#gTunes)" /><circle r="34.500" fill="#f5f3f8" />
    <path d="M-10 -20L17 -26V12Q16 19 9 20Q3 20 4 14Q5 9 12 8V-13L-5 -9V16Q-6 24 -14 24Q-21 23 -20 18Q-18 12 -10 13Z" fill="url(#gNoteGlyph)" />
  </g>],
  ["iBooks", <g>
    <circle r="38" fill="url(#gRing)" /><circle r="35" fill="url(#gBooks)" />
    <path d="M-1 -13Q-11 -22 -23 -15V18Q-10 13 -1 22ZM1 -13Q11 -22 23 -15V18Q10 13 1 22Z" fill="#f2f0ee" />
  </g>],
  ["App Store", <g>
    <circle r="38" fill="url(#gRing)" /><circle r="35" fill="url(#gStore)" />
    <path d="M3 -21L-13 7M-3 -21L19 18M-22 7H4M16 7H22M-16 15L-18 18" stroke="#fff" strokeWidth="6" strokeLinecap="round" fill="none" />
  </g>],
  ["System Preferences", <g>
    <rect x="-37" y="-35" width="74" height="70" rx="3" fill="url(#gPref)" /><circle r="31" fill="#303030" />
    <circle r="26" fill="none" stroke="#b9b5b0" strokeWidth="4" strokeDasharray="3 2.440" /><circle r="22" fill="#3a3a3a" stroke="#c4c0ba" strokeWidth="4.500" />
    <path d="M0 0H21M0 0L-11 -19M0 0L-11 19" stroke="#c4c0ba" strokeWidth="4.500" /><circle r="4" fill="#c4c0ba" />
  </g>],
  ["Virtual Machine", <g>
    <rect x="-42" y="-42" width="83" height="84" rx="3" fill="#eceff0" stroke="#999" strokeWidth="1" /><rect x="-38" y="-38" width="75" height="65" fill="#0e0e0e" />
    <rect x="-38" y="-27" width="75" height="44" fill="#f2f5f8" /><path d="M-38 -27H37V-22H-38Z" fill="#7a99bf" /><path d="M-38 -22H-22V17H-38Z" fill="#d6dde4" /><path d="M-38 15H37V17H-38Z" fill="#3a66a0" />
    {lines(7, -18, 5, -36, -25, "#7c93ad")}{lines(4, -18, 4, -19, -8, "#dba0d8")}{lines(3, 3, 4, -19, 0, "#aab6c4")}
    <rect x="14" y="16" width="28" height="29" fill="#3ba1ea" /><path d="M14 45L42 16M26 16L30 30M14 30L42 34" stroke="#0c1c38" strokeWidth="1.500" /><path d="M14 34L24 45H14Z" fill="#2b3644" /><rect x="14" y="16" width="11" height="9" fill="#fff" />
    <T x="19.500" y="23" fontSize="7" fill="#111">64</T><T x="35" y="41" fontSize="15" fontWeight="800" fill="#fff">7</T>
  </g>, true],
  ["Dictionary", <g transform="translate(0 1) rotate(-8)">
    <path d="M-27 33H28V37Q0 39 -27 38Z" fill="#c9bda6" /><rect x="-29" y="-38" width="55" height="73" rx="3" fill="url(#gDict)" /><path d="M-29 -20H26M-25 -38V35" stroke="#8c2a35" strokeWidth="1" />
    <T y="-25" fontSize="11" fontFamily={SERIF} fill="#f3cfcb">Dictionary</T><T y="13" fontSize="32" fontFamily={SERIF} fill="#fff">Aa</T>
  </g>, true],
];
const StackIcon = () => (
  <g>
    <path d="M-29 -36H30V-30H-29ZM-33 -31H33V-25H-33ZM-37 -26H37V-17H-37Z" fill="#121212" stroke="#3a3a3a" strokeWidth=".7" />
    <rect x="-37" y="-17" width="74" height="41" fill="#fbfbfb" /><rect x="-37" y="24" width="74" height="8" fill="#000" />
    <T y="3" fontSize="6" fontFamily={SERIF} fontWeight="700" fill="#4c9abb">Understanding</T><T y="10" fontSize="6" fontFamily={SERIF} fontWeight="700" fill="#4c9abb">VCS Basics</T>
    <path d="M-13 13H-4M1 13H13" stroke="#aaa" strokeWidth="1" />
  </g>
);
const TrashIcon = () => (
  <g>
    <path d="M-24 -33L-12 -40L-4 -36L8 -40L16 -35L25 -31L22 -20H-20Z" fill="#e9ebec" /><path d="M-14 -36L-6 -39L-8 -30L-16 -27ZM4 -33L12 -36L20 -26L8 -24Z" fill="#4a5360" /><path d="M-8 -31L0 -34L2 -24L-9 -22Z" fill="#4fbf9a" /><path d="M10 -31L15 -29L12 -24Z" fill="#d0583c" />
    <path d="M-31 -31Q0 -14 31 -31L23 31Q21 40 0 40T-23 31Z" fill="url(#gTrash)" /><path d="M-4 -18L-8 20L6 36M14 -20L8 10" stroke="#fff" strokeOpacity=".25" strokeWidth="6" fill="none" />
    <ellipse cx="0" cy="-31" rx="31" ry="6" fill="none" stroke="#f4f4f4" strokeWidth="1.500" />
  </g>
);
const DockIcon = ({ children }) => (
  <svg width="94" height="96" viewBox="-47 -48 94 96">{children}</svg>
);

export default function App() {
  return (
    <Screen>
      <GlobalStyle />
      <SharedDefs />
      <MenuBar>
        <AppleSlot><FaApple size={36.500} /></AppleSlot>
        <MenuItems>
          {MENUS.map(([label, w, weight]) => <Fit key={label} w={w} drop={1} weight={weight || 500}>{label}</Fit>)}
        </MenuItems>
        <StatusItems>
          <EyeIcon /><Gap $w={16} /><WifiIcon /><Gap $w={22} />
          <Fit w={46} size={24.500} drop={0} weight={500}>16%</Fit><Gap $w={8} /><BatteryIcon /><Gap $w={36} />
          <Fit w={172} drop={1} weight={500}>Tue 12:13 PM</Fit><Gap $w={42} /><SearchIcon /><Gap $w={34} />
          <svg width="32" height="32" viewBox="-16 -16 32 32"><SiriOrb r={16} /></svg><Gap $w={24} /><ListIcon />
        </StatusItems>
      </MenuBar>

      <Window>
        <TabStrip>
          <Lights>
            <Light $c="#fc605b" $b="#e0443e" /><Light $c="#fdbf41" $b="#dea033" /><Light $c="#33c948" $b="#24a937" />
          </Lights>
          <TabBox $active $z={3}>
            <TechLogo size={32} />
            <TabTitle $w={349} $ml={12} $fade><Fit w={354} size={24} drop={2} stroke={0.300}>- The Tech Academy | Learn Co</Fit></TabTitle>
            <Gap $w={10} /><Close />
          </TabBox>
          <TabBox $z={2}>
            <W3Icon>w3</W3Icon>
            <TabTitle $w={346} $ml={12}><Fit w={337} size={24} drop={3} stroke={0.300}>SQL PRIMARY KEY Constraint</Fit></TabTitle>
            <Gap $w={13} /><Close />
          </TabBox>
          <TabBox $z={1}>
            <Gap $w={4} />
            <FaApple size={29} color="#555" />
            <TabTitle $w={349} $ml={10} $fade><Fit w={354} size={24} drop={3} stroke={0.300}>How to take a screenshot on yo</Fit></TabTitle>
            <Gap $w={10} /><Close />
          </TabBox>
          <NewTab />
          <Profile><Fit w={58} size={24} stroke={0.300}>Scott</Fit></Profile>
        </TabStrip>

        <Toolbar>
          <MdArrowBack size={39} /><Gap $w={17} /><MdArrowForward size={39} color="#d3d3d3" /><Gap $w={17} /><MdRefresh size={41} />
          <Omnibox>
            <MdLock size={24} color="#188041" />
            <Fit w={92} ml={12} color="#188041" stroke={0.300}>Secure</Fit>
            <Divider />
            <Fit w={66} color="#188041" stroke={0.300}>https</Fit>
            <Fit w={27} color="#808080">://</Fit>
            <Fit w={409} color="#000" stroke={0.300}>www.learncodinganywhere.com</Fit>
            <Fit w={871} color="#808080" stroke={0.300}>/LMS#/courseView/:30412f0e-3a23-48b9-bf3e-a734fc57825b/:36</Fit>
            <Spacer />
            <MdVpnKey size={31} /><Gap $w={20} /><MdStarBorder size={37} />
          </Omnibox>
          <Spacer />
          <svg width="6" height="28" viewBox="0 0 6 28" fill="currentColor"><circle cx="3" cy="4" r="3" /><circle cx="3" cy="14" r="3" /><circle cx="3" cy="24" r="3" /></svg>
        </Toolbar>

        <PageHeader>
          <LogoSlot><TechLogo size={70} /></LogoSlot>
          <Hamburger aria-label="Menu"><i /><i /><i /></Hamburger>
          <LogOut><Fit w={159} size={39} drop={1} color={ORANGE}>Log Out</Fit></LogOut>
        </PageHeader>

        <Body>
          <Sidebar>
            {NAV.map(([label, w, ml, icon, font]) => (
              <NavItem key={label}>
                {icon}
                <Fit w={w} ml={ml} drop={0} size={font ? 43 : 36} font={font} stroke={font ? 1.100 : 0}>{label}</Fit>
              </NavItem>
            ))}
          </Sidebar>
          <Content>
            <Fit w={531} size={65} font={CONDENSED} drop={1} weight={500} color={NAVY}>DATABASE &amp; SQL COURSE</Fit>
            <PageNumber><Fit w={265} size={35} drop={1} font={SERIF} color="#333" stroke={0.500}>Page Number: 36</Fit></PageNumber>
            <Bars>
              <Track>
                <Fill $c="#3b99ce" style={{ width: "36%" }}><Fit w={175} size={37} font={CONDENSED} weight={700}>Progress: 36%</Fit></Fill>
                <HelpIcon />
              </Track>
              <Track>
                <Fill $c="#4ab04a" style={{ width: "25%" }}><Fit w={147} size={37} font={CONDENSED} weight={700}>Target: 25%</Fit></Fill>
                <HelpIcon />
              </Track>
            </Bars>
            <PagerButtons mt={14} />
            <Score><Fit w={289} size={42} font={CONDENSED} weight={500} color="#2fbf52">YOUR SCORE IS: 95%</Fit></Score>
            <PagerButtons mt={28} />
          </Content>
        </Body>

        <Shelf>
          <Chip $w={412} $pl={22}>
            <svg width="24" height="31" viewBox="0 0 24 31" fill="#fff" stroke="#c4c4c4"><path d="M.5 .5H15L23.500 9V30.500H.5ZM15 .5V9H23.500" /></svg>
            <Fit w={242} ml={26} size={23.500} drop={0} stroke={0.300}>cse4701otherSQL.pptx</Fit>
            <ChipRule />
            <svg width="10" height="6" viewBox="0 0 10 6"><path d="M0 0H10L5 6Z" /></svg>
          </Chip>
          <Spacer />
          <Chip $w={178} $pl={24}>
            <svg width="28" height="25" viewBox="0 0 28 25" fill="#555"><path d="M10 0H18V9H23L14 18L5 9H10ZM0 22H28V25H0Z" /></svg>
            <Fit w={90} ml={10} size={24} drop={0} stroke={0.300}>Show All</Fit>
          </Chip>
          <Gap $w={19} /><Close color="#000" />
        </Shelf>
      </Window>

      <Desktop>
        <DockBar>
          {APPS.map(([name, art, running]) => (
            <Slot key={name}><DockIcon>{art}</DockIcon>{running && <RunDot />}</Slot>
          ))}
          <DockRule />
          <Slot><DockIcon><StackIcon /></DockIcon></Slot>
          <Slot><DockIcon><TrashIcon /></DockIcon></Slot>
        </DockBar>
      </Desktop>
    </Screen>
  );
}
